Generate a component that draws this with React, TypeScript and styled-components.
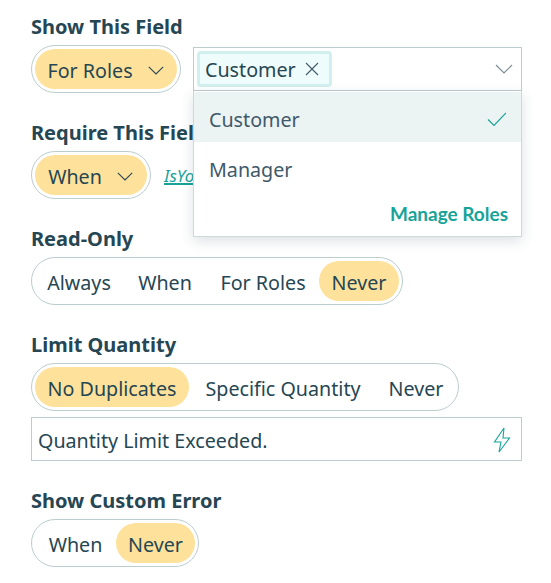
import React from 'react';
import styled, { createGlobalStyle } from 'styled-components';

const GlobalStyle = createGlobalStyle`
  html, body {
    margin: 0;
    padding: 0;
    background: #fff;
    font-family: 'Noto Sans', 'Open Sans', Arial, sans-serif;
    color: #264653;
  }
`;

const Page = styled.div`
  position: relative;
  width: 491px;
  padding: 14px 0 0 31px;
  display: flex;
  flex-direction: column;
`;

const Section = styled.section`
  display: flex;
  flex-direction: column;
  margin-bottom: 27px;
`;

const Label = styled.div`
  font-size: 20px;
  font-weight: 700;
  line-height: 26px;
  color: #264653;
  margin-bottom: 5px;
  white-space: nowrap;
`;

const Row = styled.div`
  display: flex;
  align-items: center;
`;

const Pill = styled.div`
  display: inline-flex;
  align-items: center;
  height: 48px;
  box-sizing: border-box;
  padding: 3px;
  border: 1px solid #bccdcf;
  border-radius: 24px;
  background: #fff;
`;

const Option = styled.div<{ $active?: boolean; $width: number }>`
  display: flex;
  align-items: center;
  justify-content: center;
  gap: 14px;
  width: ${p => p.$width}px;
  height: 40px;
  padding-top: 2px;
  box-sizing: border-box;
  border-radius: 20px;
  font-size: 19.7px;
  color: #264653;
  background: ${p => (p.$active ? '#fee29b' : 'transparent')};
`;

const TagInput = styled.div`
  flex: 1;
  height: 44px;
  box-sizing: border-box;
  margin-left: 12px;
  padding: 0 7px 0 3px;
  border: 1px solid #bccdcf;
  display: flex;
  align-items: center;
  justify-content: space-between;
`;

const Tag = styled.div`
  display: flex;
  align-items: center;
  gap: 9px;
  height: 36px;
  width: 135px;
  box-sizing: border-box;
  padding: 0 0 0 5px;
  background: #effcfc;
  border: 3px solid #d2efef;
  border-radius: 4px;
  font-size: 19.7px;
  white-space: nowrap;
`;

const Menu = styled.div`
  position: absolute;
  top: 91px;
  left: 193px;
  width: 329px;
  height: 146px;
  box-sizing: border-box;
  padding-top: 1px;
  border: 1px solid #cddadc;
  border-top: 0;
  background: #fff;
  box-shadow: 0 4px 12px rgba(38, 70, 83, 0.16);
  z-index: 2;
`;

const MenuItem = styled.div<{ $active?: boolean }>`
  display: flex;
  align-items: center;
  justify-content: space-between;
  height: 50px;
  box-sizing: border-box;
  padding: 4px 15px 0;
  font-size: 19.7px;
  color: #40596a;
  background: ${p => (p.$active ? '#ecf3f3' : 'transparent')};
`;

const ManageLink = styled.div`
  text-align: right;
  padding: 10px 13px 0 0;
  font-family: Lato, 'Noto Sans', sans-serif;
  font-size: 19px;
  font-weight: 700;
  color: #17a398;
`;

const ConditionLink = styled.span`
  margin-left: 13px;
  font-size: 17px;
  font-style: italic;
  color: #17a398;
  text-decoration: underline;
  text-decoration-thickness: 2px;
  white-space: nowrap;
`;

const TextField = styled.div`
  display: flex;
  align-items: center;
  justify-content: space-between;
  height: 44px;
  box-sizing: border-box;
  margin-top: 6px;
  padding: 2px 10px 0 6px;
  border: 1px solid #bccdcf;
  font-size: 19.7px;
`;

const Chevron = ({ color = '#264653', size = 20 }: { color?: string; size?: number }) => (
  <svg width={size} height={size * 0.6} viewBox="0 0 20 12" fill="none" stroke={color} strokeWidth="1.2">
    <path d="M2 2l8 8 8-8" />
  </svg>
);

export default function App() {
  return (
    <>
      <GlobalStyle />
      <Page>
        <Section>
          <Label>Show This Field</Label>
          <Row>
            <Pill>
              <Option $active $width={142}>
                For Roles <Chevron size={18} />
              </Option>
            </Pill>
            <TagInput>
              <Tag>
                Customer
                <svg width="14" height="14" viewBox="0 0 14 14" stroke="#40596a" strokeWidth="1.1">
                  <path d="M1 1l12 12M13 1L1 13" />
                </svg>
              </Tag>
              <Chevron color="#7d8f96" />
            </TagInput>
          </Row>
        </Section>
        <Section>
          <Label>Require This Field</Label>
          <Row>
            <Pill>
              <Option $active $width={112}>
                When <Chevron size={18} />
              </Option>
            </Pill>
            <ConditionLink>IsYourCondition</ConditionLink>
          </Row>
        </Section>
        <Section>
          <Label>Read-Only</Label>
          <Row>
            <Pill>
              <Option $width={88}>Always</Option>
              <Option $width={84}>When</Option>
              <Option $width={112}>For Roles</Option>
              <Option $active $width={80}>Never</Option>
            </Pill>
          </Row>
        </Section>
        <Section>
          <Label>Limit Quantity</Label>
          <Row>
            <Pill>
              <Option $active $width={154}>No Duplicates</Option>
              <Option $width={188}>Specific Quantity</Option>
              <Option $width={78}>Never</Option>
            </Pill>
          </Row>
          <TextField>
            Quantity Limit Exceeded.
            <svg width="18" height="26" viewBox="0 0 18 26" fill="none" stroke="#17a398" strokeWidth="1.1">
              <path d="M11 1L1.5 15h6.5l-2 10 10.500-14h-6.500z" />
            </svg>
          </TextField>
        </Section>
        <Section>
          <Label>Show Custom Error</Label>
          <Row>
            <Pill>
              <Option $width={81}>When</Option>
              <Option $active $width={79}>Never</Option>
            </Pill>
          </Row>
        </Section>
        <Menu>
          <MenuItem $active>
            Customer
            <svg width="22" height="16" viewBox="0 0 22 16" fill="none" stroke="#17a398" strokeWidth="1.2">
              <path d="M4 8.500l6 6L22 2" />
            </svg>
          </MenuItem>
          <MenuItem>Manager</MenuItem>
          <ManageLink>Manage Roles</ManageLink>
        </Menu>
      </Page>
    </>
  );
}
